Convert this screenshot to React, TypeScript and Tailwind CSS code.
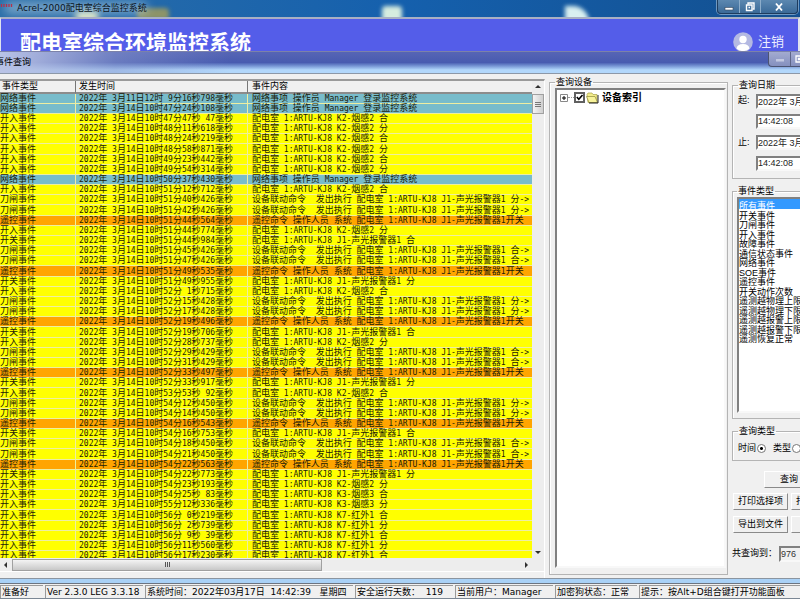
import type { ReactNode } from 'react'

type Kind = 'net' | 'in' | 'knife' | 'remote' | 'switch'
type Row = [Kind, string, string]

const KIND_LABELS: Record<Kind, string> = {
  net: '网络事件',
  in: '开入事件',
  knife: '刀闸事件',
  remote: '遥控事件',
  switch: '开关事件',
}

const KIND_COLORS: Record<Kind, string> = {
  net: 'bg-[#78bccb]',
  in: 'bg-[#ffff00]',
  knife: 'bg-[#ffff00]',
  remote: 'bg-[#ffa500]',
  switch: 'bg-[#ffff00]',
}

const LOGIN = '网络事项 操作员 Manager 登录监控系统'
const LINK = '设备联动命令  发出执行 配电室 1:ARTU-KJ8 J1-声光报警器1 '
const REMOTE = '遥控命令 操作人员 系统 配电室 1:ARTU-KJ8 J1-声光报警器1开关'
const UNIT = '配电室 1:ARTU-KJ8 '

const ROWS: Row[] = [
  ['net', '11日12时 9分16秒798', LOGIN],
  ['net', '14日10时47分24秒108', LOGIN],
  ['in', '14日10时47分47秒 47', UNIT + 'K2-烟感2 合'],
  ['in', '14日10时48分11秒618', UNIT + 'K2-烟感2 分'],
  ['in', '14日10时48分24秒219', UNIT + 'K2-烟感2 合'],
  ['in', '14日10时48分58秒871', UNIT + 'K2-烟感2 分'],
  ['in', '14日10时49分23秒442', UNIT + 'K2-烟感2 合'],
  ['in', '14日10时49分54秒314', UNIT + 'K2-烟感2 分'],
  ['net', '14日10时50分37秒430', LOGIN],
  ['in', '14日10时51分12秒712', UNIT + 'K2-烟感2 合'],
  ['knife', '14日10时51分40秒426', LINK + '分->'],
  ['knife', '14日10时51分42秒426', LINK + '分->'],
  ['remote', '14日10时51分44秒564', REMOTE],
  ['in', '14日10时51分44秒774', UNIT + 'K2-烟感2 分'],
  ['switch', '14日10时51分44秒984', UNIT + 'J1-声光报警器1 合'],
  ['knife', '14日10时51分45秒426', LINK + '合->'],
  ['knife', '14日10时51分47秒426', LINK + '合->'],
  ['remote', '14日10时51分49秒535', REMOTE],
  ['switch', '14日10时51分49秒955', UNIT + 'J1-声光报警器1 分'],
  ['in', '14日10时52分 1秒715', UNIT + 'K2-烟感2 合'],
  ['knife', '14日10时52分15秒428', LINK + '分->'],
  ['knife', '14日10时52分17秒428', LINK + '分->'],
  ['remote', '14日10时52分19秒496', REMOTE],
  ['switch', '14日10时52分19秒706', UNIT + 'J1-声光报警器1 合'],
  ['in', '14日10时52分28秒737', UNIT + 'K2-烟感2 分'],
  ['knife', '14日10时52分29秒429', LINK + '合->'],
  ['knife', '14日10时52分31秒429', LINK + '合->'],
  ['remote', '14日10时52分33秒497', REMOTE],
  ['switch', '14日10时52分33秒917', UNIT + 'J1-声光报警器1 分'],
  ['in', '14日10时53分53秒 92', UNIT + 'K2-烟感2 合'],
  ['knife', '14日10时54分12秒450', LINK + '分->'],
  ['knife', '14日10时54分14秒450', LINK + '分->'],
  ['remote', '14日10时54分16秒543', REMOTE],
  ['switch', '14日10时54分16秒753', UNIT + 'J1-声光报警器1 合'],
  ['knife', '14日10时54分18秒450', LINK + '合->'],
  ['knife', '14日10时54分21秒450', LINK + '合->'],
  ['remote', '14日10时54分22秒563', REMOTE],
  ['switch', '14日10时54分22秒773', UNIT + 'J1-声光报警器1 分'],
  ['in', '14日10时54分23秒193', UNIT + 'K2-烟感2 分'],
  ['in', '14日10时54分25秒 83', UNIT + 'K3-烟感3 合'],
  ['in', '14日10时55分12秒336', UNIT + 'K3-烟感3 分'],
  ['in', '14日10时56分 0秒219', UNIT + 'K7-红外1 合'],
  ['in', '14日10时56分 2秒739', UNIT + 'K7-红外1 分'],
  ['in', '14日10时56分 9秒 39', UNIT + 'K7-红外1 合'],
  ['in', '14日10时56分11秒560', UNIT + 'K7-红外1 分'],
  ['in', '14日10时56分17秒230', UNIT + 'K7-红外1 合'],
]

const EVENT_TYPES = [
  '所有事件', '开关事件', '刀闸事件', '开入事件', '故障事件', '通信状态事件', '网络事件', 'SOE事件',
  '遥控事件', '开关动作次数', '遥测越物理上限', '遥测越物理下限', '遥测越报警上限', '遥测越报警下限', '遥测恢复正常',
]

const SUNKEN = 'border-2 border-t-[#808080] border-l-[#808080] border-r-[#f8f8f8] border-b-[#f8f8f8]'
const FIELD = `${SUNKEN} h-[15px] w-[90px] bg-white text-[9px] text-[#222]`
const BUTTON = 'h-[17px] shrink-0 border border-t-white border-l-white border-r-[#8a8a8a] border-b-[#8a8a8a] bg-[#f0f0f0] text-[9px] leading-none whitespace-nowrap'
const CELL = 'border-b border-[#eeeea0] p-0 text-[9px] leading-[9px] whitespace-pre'

// latin runs are set one size down so that two of them take about one CJK cell
function Mixed({ text }: { text: string }) {
  return (
    <>
      {text.split(/([\x20-\x7e]+)/).filter(Boolean).map((run, i) =>
        run.charCodeAt(0) < 127 ? (
          <span key={i} className="font-['DejaVu_Sans_Mono',monospace] text-[8px]">{run}</span>
        ) : (
          run
        )
      )}
    </>
  )
}

function Group({ title, className, children }: { title: string; className: string; children: ReactNode }) {
  return (
    <fieldset className={`min-w-0 border border-[#b4b4b4] shadow-[inset_1px_1px_0_#fff] ${className}`}>
      <legend className="px-px text-[9px] leading-[12px]">{title}</legend>
      {children}
    </fieldset>
  )
}

function Arrow({ points, label }: { points: string; label: string }) {
  return (
    <button aria-label={label} className="flex size-3 shrink-0 items-center justify-center">
      <svg width="6" height="6" viewBox="0 0 6 6"><polygon points={points} fill="#303030" /></svg>
    </button>
  )
}

function TitleBar() {
  return (
    <header className="relative flex h-[17px] shrink-0 items-start overflow-hidden bg-linear-to-r from-[#2a6ea8] via-[#1560ad] to-[#135090]">
      <span className="absolute top-2.5 left-[75px] h-3 w-6 rounded-full bg-[#e6edc4] blur-[3px]" />
      <span className="absolute top-2 left-[137px] h-3 w-8 rounded bg-[#8d9468] blur-[2px]" />
      <span className="absolute top-1.5 left-[382px] h-4 w-5 rounded-sm bg-[#d6ecdf] blur-[2px]" />
      <span className="absolute top-1.5 left-[565px] h-4 w-6 rounded-tr-full bg-[#d9f0f0] blur-[2px]" />
      <span className="absolute top-0.5 left-1 h-3 w-36 rounded-full bg-[#a9c6dc]/60 blur-[5px]" />
      <svg className="relative mt-[3px] shrink-0" width="14" height="6" viewBox="0 0 14 6">
        <path d="M1.5 1v3M4 1v3M6.500 1v3M9 1v3M11.500 1v3" stroke="#b5304a" strokeWidth="1.300" />
      </svg>
      <h1 className="relative ml-[3px] text-[9px] leading-[16px] whitespace-nowrap text-[#0c1420]">Acrel-2000配电室综合监控系统</h1>
      <div className="relative mr-[2px] ml-auto flex h-[14px] rounded-b border border-t-0 border-[#1e3c5e] bg-linear-to-b from-[#5c88b0] to-[#3a6a98] shadow-[0_0_0_1px_#6f98bf]">
        <button aria-label="最小化" className="flex w-[22px] items-center justify-center border-r border-[#8cadca]">
          <svg width="10" height="10" viewBox="0 0 10 10"><rect x="1" y="5.500" width="8" height="2.500" fill="#fff" stroke="#3b4a5c" strokeWidth=".6" /></svg>
        </button>
        <button aria-label="还原" className="flex w-[21px] items-center justify-center border-r border-[#8cadca]">
          <svg width="10" height="10" viewBox="0 0 10 10" fill="none" stroke="#fff" strokeWidth="1.400">
            <path d="M3 2.500V1h6v6H7.500" />
            <path d="M1.500 3h5.500v5.500H1.500zM3.500 5.500h1.500" />
          </svg>
        </button>
        <button aria-label="关闭" className="flex w-9 items-center justify-center">
          <svg width="10" height="10" viewBox="0 0 10 10"><path d="M2 1.500l6 7M8 1.500l-6 7" stroke="#fff" strokeWidth="1.900" /></svg>
        </button>
      </div>
    </header>
  )
}

function Banner() {
  return (
    <div className="h-[34px] shrink-0 overflow-hidden border-t-2 border-r-2 border-l border-t-[#a9b0c4] border-r-[#dfe3ee] border-l-[#dfe3ee] bg-[#545de9]">
      <div className="flex items-start justify-between pt-[12px] pr-[14px] pl-[19px]">
        <h2 className="text-[21px] leading-[24px] font-bold whitespace-nowrap text-white">配电室综合环境监控系统</h2>
        <button className="flex items-center gap-[5px] text-[13px] leading-[22px] whitespace-nowrap text-[#eceeff]">
          <svg width="20" height="20" viewBox="0 0 20 20">
            <circle cx="10" cy="10" r="9.800" fill="#b4b9e2" />
            <circle cx="10" cy="7.500" r="3.700" fill="#fff" />
            <path d="M3.500 16.500c.5-3 2.500-4.500 6.500-4.500s6 1.500 6.500 4.500a9.500 9.500 0 0 1-13 0z" fill="#fff" />
          </svg>
          注销
        </button>
      </div>
    </div>
  )
}

function DialogTitle() {
  return (
    <div className="flex h-[23px] shrink-0 items-start overflow-hidden border-t border-b border-t-[#7c82a8] border-b-[#8c98a8] bg-linear-to-b from-[#5564b4] from-5% via-[#485bb0] via-50% to-[#b2d7fb] to-85%">
      <div className="flex-1 bg-linear-to-r from-[#b9c3e6] via-[#8b9bd0]/50 via-15% to-transparent to-30%">
        <h3 className="-ml-[5px] text-[9px] leading-[21px] text-black">事件查询</h3>
      </div>
      <div className="flex h-[15px] w-8 shrink-0 rounded-bl border border-t-0 border-r-0 border-[#4c5472] bg-linear-to-b from-[#a3abd0] to-[#8590bf]">
        <button aria-label="最小化窗口" className="flex w-[22px] items-center justify-center border-r border-[#5c6488]">
          <svg width="10" height="8" viewBox="0 0 10 8"><rect x="1" y="4" width="8" height="2.500" fill="#c3c9e2" /></svg>
        </button>
        <button aria-label="最大化窗口" className="flex flex-1 items-center overflow-hidden pl-1">
          <svg className="shrink-0" width="9" height="8" viewBox="0 0 9 8"><path d="M1 1h7v6H1zM3.500 3.500h2v1h-2z" fill="none" stroke="#fff" strokeWidth="1.300" /></svg>
        </button>
      </div>
    </div>
  )
}

function EventTable() {
  return (
    <section className="mt-[5px] flex min-w-0 flex-1 flex-col border-t-2 border-r border-t-[#9a9a9a] border-r-[#fff]">
      <div className="flex min-h-0 flex-1">
        <div className="min-w-0 flex-1 overflow-hidden">
          <table className="w-full table-fixed border-separate border-spacing-0">
            <colgroup>
              <col className="w-[76px]" />
              <col className="w-[172px]" />
              <col />
            </colgroup>
            <thead>
              <tr className="h-[13px] text-left text-[9px] leading-[11px]">
                <th className="border-r border-b-2 border-r-[#777] border-b-[#8c8c8c] p-0 pl-0.5 font-normal">事件类型</th>
                <th className="border-r border-b-2 border-r-[#777] border-b-[#8c8c8c] p-0 pl-[3px] font-normal">发生时间</th>
                <th className="border-b-2 border-b-[#8c8c8c] p-0 pl-1 font-normal">事件内容</th>
              </tr>
            </thead>
            <tbody className="text-[#1a1a08] [&>tr]:h-[10px] [&>tr:nth-child(6n)]:h-[11px]">
              {ROWS.map(([kind, time, content], i) => (
                <tr key={i} className={KIND_COLORS[kind]}>
                  <td className={`${CELL} border-r`}>{KIND_LABELS[kind]}</td>
                  <td className={`${CELL} border-r pl-[3px]`}><Mixed text={`2022年 3月${time}毫秒`} /></td>
                  <td className={`${CELL} pl-1`}><Mixed text={content} /></td>
                </tr>
              ))}
            </tbody>
          </table>
        </div>
        <div className="flex w-[12px] shrink-0 flex-col bg-[#ededed]">
          <Arrow label="向上滚动" points="3,1 6,4 0,4" />
          <div className="mt-px flex h-5 flex-col items-center justify-center gap-px border border-[#a0a0a0] bg-linear-to-r from-[#f4f4f4] to-[#cfcfcf]">
            <span className="h-px w-[6px] bg-[#777]" />
            <span className="h-px w-[6px] bg-[#777]" />
            <span className="h-px w-[6px] bg-[#777]" />
          </div>
          <div className="flex-1" />
          <Arrow label="向下滚动" points="0,2 6,2 3,5" />
        </div>
      </div>
      <div className="flex h-[13px] shrink-0 items-center bg-[#ededed]">
        <Arrow label="向左滚动" points="4,0 4,6 1,3" />
        <div className="flex h-3 w-[57%] items-center justify-center gap-px border border-[#a0a0a0] bg-linear-to-b from-[#f4f4f4] to-[#c8c8c8]">
          <span className="h-[5px] w-px bg-[#555]" />
          <span className="h-[5px] w-px bg-[#555]" />
          <span className="h-[5px] w-px bg-[#555]" />
        </div>
        <div className="flex-1" />
        <Arrow label="向右滚动" points="2,0 2,6 5,3" />
        <span className="w-3" />
      </div>
      <div className="h-[7px] shrink-0 border-t border-white bg-[#f0f0f0]" />
    </section>
  )
}

function DevicePanel() {
  return (
    <div className="flex w-[179px] shrink-0 flex-col pt-[2px] pb-[3px]">
      <Group title="查询设备" className="flex flex-1 flex-col pr-px pb-[6px] pl-[5px]">
        <div className={`${SUNKEN} h-full bg-white`}>
          <div className="flex items-center pt-px pl-[3px]">
            <button aria-label="展开" className="shrink-0">
              <svg width="8" height="8" viewBox="0 0 8 8"><path d="M.5.5h7v7h-7z" fill="#fff" stroke="#888" /><path d="M2 4h4M4 2v4" stroke="#000" /></svg>
            </button>
            <span className="w-[6px] border-t border-dotted border-[#999]" />
            <label className="flex items-center">
              <input
                type="checkbox"
                defaultChecked
                className="size-[11px] appearance-none border-2 border-[#606060] bg-white"
              />
              <svg className="pointer-events-none relative -ml-[11px]" width="11" height="11" viewBox="0 0 11 11"><path d="M2.800 5l2 2.300L8.500 3" fill="none" stroke="#000" strokeWidth="1.600" /></svg>
              <svg className="ml-px" width="13" height="12" viewBox="0 0 13 12">
                <path d="M1 2.500L2 1h4l1 1.500h4v8H2z" fill="#f2ec8a" stroke="#a9a24a" strokeWidth=".7" />
                <path d="M.5 4.500h8.500l2.500 6H3z" fill="#f8f39a" stroke="#8f893a" strokeWidth=".7" />
                <path d="M3 11h9V3" fill="none" stroke="#222" />
              </svg>
              <span className="ml-[3px] text-[10px] leading-[13px] font-bold">设备索引</span>
            </label>
          </div>
        </div>
      </Group>
    </div>
  )
}

function QueryPanel() {
  return (
    <aside className="w-[68px] shrink-0 overflow-hidden pt-[5px]">
      <form className="w-[130px]" onSubmit={(e) => e.preventDefault()}>
        <Group title="查询日期" className="h-[100px] pl-[5px]">
          <div className="flex h-[20px] items-center gap-[3px]">
            <label htmlFor="from-date" className="w-[15px] shrink-0 text-[9px] whitespace-nowrap">起:</label>
            <input id="from-date" className={FIELD} defaultValue="2022年 3月14日" />
          </div>
          <div className="flex h-[20px] items-center pl-[18px]">
            <input aria-label="起始时间" className={FIELD} defaultValue="14:42:08" />
          </div>
          <div className="mt-px flex h-[21px] items-center gap-[3px]">
            <label htmlFor="to-date" className="w-[15px] shrink-0 text-[9px] whitespace-nowrap">止:</label>
            <input id="to-date" className={FIELD} defaultValue="2022年 3月17日" />
          </div>
          <div className="flex h-[20px] items-center pl-[18px]">
            <input aria-label="终止时间" className={FIELD} defaultValue="14:42:08" />
          </div>
        </Group>
        <Group title="事件类型" className="mt-[6px] h-[234px] pl-1">
          <select
            aria-label="事件类型"
            size={15}
            defaultValue="所有事件"
            className={`${SUNKEN} block h-[216px] w-[110px] overflow-hidden bg-white p-0 text-[9px]`}
          >
            {EVENT_TYPES.map((name) => (
              <option
                key={name}
                className="h-[9px] min-h-0 p-0 leading-[9px] checked:bg-linear-to-r checked:from-[#3399ff] checked:to-[#3399ff] checked:[-webkit-text-fill-color:#fff] odd:h-[10px]"
              >
                {name}
              </option>
            ))}
          </select>
        </Group>
        <Group title="查询类型" className="mt-[6px] h-[36px] pl-[5px]">
          <div className="flex items-center pt-[6px] text-[9px] leading-[11px] whitespace-nowrap">
            <label className="flex items-center">
              时间
              <input type="radio" name="query-by" defaultChecked className="ml-px size-[9px] appearance-none rounded-full border border-[#777] bg-[radial-gradient(circle,#000_0_1px,#fff_2px)]" />
            </label>
            <label className="ml-[7px] flex items-center">
              类型
              <input type="radio" name="query-by" className="ml-px size-[9px] appearance-none rounded-full border border-[#777] bg-white" />
            </label>
          </div>
        </Group>
        <div className="mt-[4px] pl-[32px]">
          <button className={`${BUTTON} w-[50px]`}>查询</button>
        </div>
        <div className="mt-[4px] flex gap-[3px] pl-px">
          <button className={`${BUTTON} w-[55px]`}>打印选择项</button>
          <button className={`${BUTTON} w-[55px]`}>打印所有项</button>
        </div>
        <div className="mt-[6px] flex gap-[3px] pl-px">
          <button className={`${BUTTON} w-[55px]`}>导出到文件</button>
          <button className={`${BUTTON} w-[55px]`}>退出</button>
        </div>
        <div className="mt-[13px] flex items-center">
          <label htmlFor="total" className="w-[47px] text-[9px] whitespace-nowrap">共查询到：</label>
          <input id="total" readOnly defaultValue="976" className={`${SUNKEN} h-[16px] w-[50px] bg-[#f0f0f0] text-[9px] text-[#333]`} />
        </div>
      </form>
    </aside>
  )
}

function StatusCell({ className, children }: { className: string; children: ReactNode }) {
  return (
    <div className={`h-[13px] shrink-0 overflow-hidden border-t border-l border-[#9a9a9a] pl-px leading-[13px] whitespace-pre ${className}`}>
      {children}
    </div>
  )
}

export default function App() {
  return (
    <div className="flex h-screen flex-col overflow-hidden bg-[#f0f0f0] font-['DejaVu_Sans','Noto_Sans_CJK_SC',sans-serif] text-black">
      <TitleBar />
      <Banner />
      <DialogTitle />
      <main className="flex min-h-0 flex-1 gap-1 font-['Liberation_Sans','Noto_Sans_CJK_SC',sans-serif]">
        <EventTable />
        <DevicePanel />
        <QueryPanel />
      </main>
      <div className="h-[6px] shrink-0 border-t border-b border-t-[#8b95a0] border-b-[#6c7480] bg-[#a9d1f6]" />
      <footer className="flex h-[15px] shrink-0 gap-[2px] border-b border-[#7b8794] pt-px text-[9px]">
        <StatusCell className="w-[43px]">准备好</StatusCell>
        <StatusCell className="w-[98px]">Ver 2.3.0 LEG 3.3.18</StatusCell>
        <StatusCell className="w-[208px]">系统时间：2022年03月17日  14:42:39   星期四</StatusCell>
        <StatusCell className="w-[98px]">安全运行天数：  119</StatusCell>
        <StatusCell className="w-[98px]">当前用户：Manager</StatusCell>
        <StatusCell className="w-[82px]">加密狗状态：正常</StatusCell>
        <StatusCell className="flex-1">提示：按Alt+D组合键打开功能面板</StatusCell>
      </footer>
    </div>
  )
}
